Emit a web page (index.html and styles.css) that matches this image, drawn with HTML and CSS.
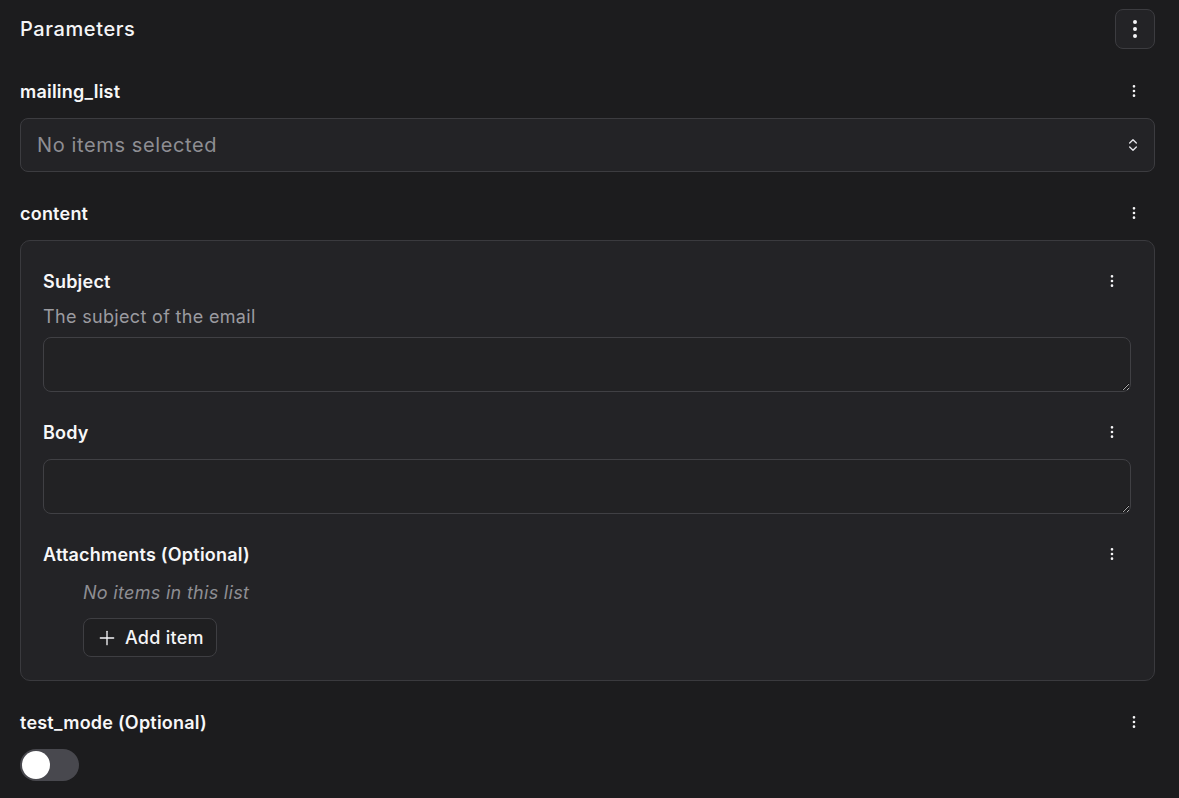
FILE: index.html
```
<!DOCTYPE html>
<html lang="en">
<head>
<meta charset="utf-8">
<title>Parameters</title>
<link rel="stylesheet" href="styles.css">
</head>
<body>
<div class="panel">
  <div class="header">
    <h1 class="title">Parameters</h1>
    <button class="icon-btn" type="button" aria-label="More">
      <svg width="24" height="24" viewBox="0 0 24 24" fill="none" stroke="currentColor" stroke-width="2" stroke-linecap="round" stroke-linejoin="round"><circle cx="12" cy="12" r="1"/><circle cx="12" cy="5" r="1"/><circle cx="12" cy="19" r="1"/></svg>
    </button>
  </div>

  <div class="field">
    <div class="label-row">
      <span class="label">mailing_list</span>
      <span class="kebab"><svg width="16" height="16" viewBox="0 0 24 24" fill="none" stroke="currentColor" stroke-width="2" stroke-linecap="round" stroke-linejoin="round"><circle cx="12" cy="12" r="1"/><circle cx="12" cy="5" r="1"/><circle cx="12" cy="19" r="1"/></svg></span>
    </div>
    <div class="select">
      <span class="placeholder">No items selected</span>
      <svg class="chev" width="16" height="16" viewBox="0 0 24 24" fill="none" stroke="currentColor" stroke-width="2" stroke-linecap="round" stroke-linejoin="round"><path d="m7 15 5 5 5-5"/><path d="m7 9 5-5 5 5"/></svg>
    </div>
  </div>

  <div class="field">
    <div class="label-row">
      <span class="label">content</span>
      <span class="kebab"><svg width="16" height="16" viewBox="0 0 24 24" fill="none" stroke="currentColor" stroke-width="2" stroke-linecap="round" stroke-linejoin="round"><circle cx="12" cy="12" r="1"/><circle cx="12" cy="5" r="1"/><circle cx="12" cy="19" r="1"/></svg></span>
    </div>
    <div class="card">
      <div class="sub-field">
        <div class="label-row">
          <span class="label">Subject</span>
          <span class="kebab"><svg width="16" height="16" viewBox="0 0 24 24" fill="none" stroke="currentColor" stroke-width="2" stroke-linecap="round" stroke-linejoin="round"><circle cx="12" cy="12" r="1"/><circle cx="12" cy="5" r="1"/><circle cx="12" cy="19" r="1"/></svg></span>
        </div>
        <div class="desc">The subject of the email</div>
        <textarea class="textarea"></textarea>
      </div>

      <div class="sub-field">
        <div class="label-row">
          <span class="label">Body</span>
          <span class="kebab"><svg width="16" height="16" viewBox="0 0 24 24" fill="none" stroke="currentColor" stroke-width="2" stroke-linecap="round" stroke-linejoin="round"><circle cx="12" cy="12" r="1"/><circle cx="12" cy="5" r="1"/><circle cx="12" cy="19" r="1"/></svg></span>
        </div>
        <textarea class="textarea"></textarea>
      </div>

      <div class="sub-field">
        <div class="label-row">
          <span class="label">Attachments (Optional)</span>
          <span class="kebab"><svg width="16" height="16" viewBox="0 0 24 24" fill="none" stroke="currentColor" stroke-width="2" stroke-linecap="round" stroke-linejoin="round"><circle cx="12" cy="12" r="1"/><circle cx="12" cy="5" r="1"/><circle cx="12" cy="19" r="1"/></svg></span>
        </div>
        <div class="list">
          <div class="empty">No items in this list</div>
          <button class="add-btn" type="button">
            <svg width="20" height="20" viewBox="0 0 24 24" fill="none" stroke="currentColor" stroke-width="1.6" stroke-linecap="round" stroke-linejoin="round"><path d="M4 12h16"/><path d="M12 4v16"/></svg>
            <span>Add item</span>
          </button>
        </div>
      </div>
    </div>
  </div>

  <div class="field">
    <div class="label-row">
      <span class="label">test_mode (Optional)</span>
      <span class="kebab"><svg width="16" height="16" viewBox="0 0 24 24" fill="none" stroke="currentColor" stroke-width="2" stroke-linecap="round" stroke-linejoin="round"><circle cx="12" cy="12" r="1"/><circle cx="12" cy="5" r="1"/><circle cx="12" cy="19" r="1"/></svg></span>
    </div>
    <div class="toggle"><span class="knob"></span></div>
  </div>
</div>
</body>
</html>
```

FILE: styles.css
```
* { box-sizing: border-box; }
html, body {
  margin: 0;
  background: #1c1c1e;
  color: #f5f5f7;
  font-family: Inter, "Noto Sans", "Liberation Sans", sans-serif;
}
.panel {
  padding: 9px 24px 20px 20px;
}
.header {
  display: flex;
  align-items: center;
  justify-content: space-between;
  height: 40px;
}
.title {
  margin: 0;
  font-size: 20px;
  font-weight: 500;
  letter-spacing: 0.6px;
  color: #f5f5f7;
}
.icon-btn {
  width: 40px;
  height: 40px;
  border: 1px solid #3c3c40;
  border-radius: 8px;
  background: #232326;
  color: #f5f5f7;
  display: flex;
  align-items: center;
  justify-content: center;
  padding: 0;
}
.field {
  margin-top: 30px;
}
.field + .field {
  margin-top: 29px;
}
.label-row {
  display: flex;
  align-items: center;
  justify-content: space-between;
  height: 24px;
  margin-bottom: 15px;
}
.label {
  font-size: 18px;
  font-weight: 600;
  letter-spacing: 0.22px;
  color: #f7f7f8;
}
.kebab {
  display: flex;
  width: 16px;
  height: 16px;
  margin-right: 13px;
  color: #f5f5f7;
}
.select {
  height: 54px;
  border: 1px solid #3c3c40;
  border-radius: 8px;
  background: #232326;
  display: flex;
  align-items: center;
  justify-content: space-between;
  padding: 0 13px 0 16px;
}
.placeholder {
  font-size: 20px;
  letter-spacing: 0.62px;
  color: #8e8e93;
}
.chev { color: #e5e5ea; }
.card {
  border: 1px solid #3a3a3e;
  border-radius: 10px;
  background: #232326;
  padding: 28px 23px 23px 22px;
}
.sub-field + .sub-field {
  margin-top: 28px;
}
.card .kebab { margin-right: 11px; }
.desc {
  font-size: 18px;
  line-height: 24px;
  letter-spacing: 0.33px;
  color: #9b9ba0;
  margin-top: -3px;
  margin-bottom: 8px;
}
.textarea {
  display: block;
  width: 100%;
  height: 55px;
  border: 1px solid #404044;
  border-radius: 8px;
  background: #222224;
  color: #f5f5f7;
  font-family: inherit;
  font-size: 16px;
  resize: vertical;
  margin: 0;
}
.list {
  display: flex;
  flex-direction: column;
  align-items: flex-start;
  gap: 13px;
  padding-left: 40px;
}
.empty {
  font-size: 18px;
  font-style: italic;
  line-height: 24px;
  letter-spacing: 0.3px;
  color: #8e8e93;
}
.add-btn {
  height: 39px;
  display: flex;
  align-items: center;
  gap: 8px;
  padding: 0 12px 0 13px;
  border: 1px solid #3e3e42;
  border-radius: 8px;
  background: #1f1f21;
  color: #f5f5f7;
  font-family: inherit;
  font-size: 18px;
  font-weight: 500;
  letter-spacing: 0.25px;
}
.toggle {
  width: 59px;
  height: 32px;
  border-radius: 16px;
  background: #48484e;
  padding: 2px;
  display: flex;
  align-items: center;
}
.knob {
  width: 28px;
  height: 28px;
  border-radius: 50%;
  background: #ffffff;
}
```
